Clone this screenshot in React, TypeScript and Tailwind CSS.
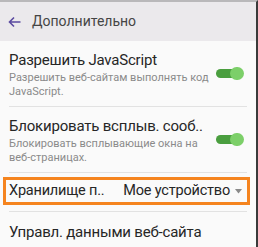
import React from "react";

/** Green "on" switch, Android Holo/Material style. */
function Toggle() {
  return (
    <div className="relative mb-[3px] h-[13px] w-[28px] shrink-0">
      <div className="absolute left-0 top-[2px] h-[9px] w-[24px] rounded-full bg-[#4a9e3f]" />
      <div className="absolute right-0 top-0 h-[13px] w-[14px] rounded-full bg-[#7ccf69]" />
    </div>
  );
}

function SwitchRow({ title, detail }: { title: string; detail: string }) {
  return (
    <div className="flex items-center gap-[3px] border-b border-[#e2e2e2] pb-[7px] pt-[9px] pr-[3px]">
      <div className="min-w-0 flex-1">
        <p className="whitespace-nowrap text-[15px] leading-[20px] tracking-[-0.2px] text-[#262626]">{title}</p>
        <p className="mt-[1px] text-[11px] leading-[14px] text-[#8a8a8a]">{detail}</p>
      </div>
      <Toggle />
    </div>
  );
}

export default function App() {
  return (
    <div
      className="h-[247px] w-[258px] overflow-hidden border-r-2 border-t-2 border-r-[#3a3a3a] border-t-[#b9b8ba] bg-[#fafafa]"
      style={{ fontFamily: 'Roboto, "Noto Sans", sans-serif' }}
    >
      <header className="flex h-[39px] items-center gap-[11px] bg-[#ebe9ec] pl-[8px]">
        <svg width="13" height="12" viewBox="0 0 13 12" fill="none">
          <path d="M12.5 6H1.5M6 1.5L1.5 6L6 10.5" stroke="#5b4aa0" strokeWidth="1.6" />
        </svg>
        <span className="text-[14px] text-[#454545]">Дополнительно</span>
      </header>

      <div className="px-[9px]">
        <SwitchRow
          title="Разрешить JavaScript"
          detail="Разрешить веб-сайтам выполнять код JavaScript."
        />
        <SwitchRow
          title="Блокировать всплыв. сооб.."
          detail="Блокировать всплывающие окна на веб-страницах."
        />
      </div>

      <div className="mx-[3px] mt-[4px] flex h-[28px] w-[247px] items-center border-[3px] border-[#f5841f] pl-[3px] pr-[5px] text-[14.5px] tracking-[-0.2px] text-[#262626]">
        <span>Хранилище п..</span>
        <span className="ml-auto">Мое устройство</span>
        <svg className="ml-[5px]" width="7" height="5" viewBox="0 0 7 5">
          <path d="M0 0H7L3.5 4.5Z" fill="#8a8a8a" />
        </svg>
      </div>

      <div className="mx-[9px] mt-[6px] border-t border-[#e2e2e2] pt-[10px] text-[15px] leading-[20px] tracking-[-0.2px] text-[#262626]">
        Управл. данными веб-сайта
      </div>
    </div>
  );
}
